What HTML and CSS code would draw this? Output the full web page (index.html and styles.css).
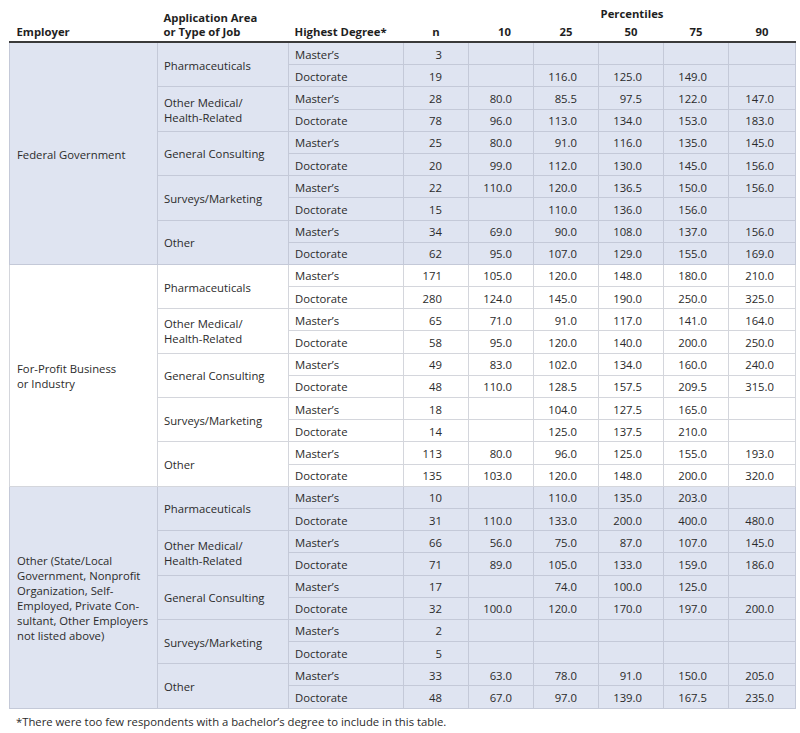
FILE: index.html
```html
<!DOCTYPE html>
<html>
<head>
<meta charset="utf-8">
<link rel="stylesheet" href="styles.css">
</head>
<body>
<div class="page">
<table class="salary">
<colgroup>
<col class="c-emp"><col class="c-area"><col class="c-deg"><col class="c-n">
<col class="c-p"><col class="c-p"><col class="c-p"><col class="c-p"><col class="c-p90">
</colgroup>
<thead>
<tr class="h1">
<th rowspan="2" class="left">Employer</th>
<th rowspan="2" class="left">Application Area<br>or Type of Job</th>
<th rowspan="2" class="left">Highest Degree*</th>
<th rowspan="2">n</th>
<th colspan="5" class="pct">Percentiles</th>
</tr>
<tr class="h2">
<th>10</th><th>25</th><th>50</th><th>75</th><th>90</th>
</tr>
</thead>
<tbody class="blue">
<tr><td rowspan="10" class="emp">Federal Government</td><td rowspan="2" class="area">Pharmaceuticals</td><td class="deg">Master’s</td><td class="n">3</td><td></td><td></td><td></td><td></td><td></td></tr>
<tr><td class="deg">Doctorate</td><td class="n">19</td><td></td><td>116.0</td><td>125.0</td><td>149.0</td><td></td></tr>
<tr><td rowspan="2" class="area">Other Medical/<br>Health-Related</td><td class="deg">Master’s</td><td class="n">28</td><td>80.0</td><td>85.5</td><td>97.5</td><td>122.0</td><td>147.0</td></tr>
<tr><td class="deg">Doctorate</td><td class="n">78</td><td>96.0</td><td>113.0</td><td>134.0</td><td>153.0</td><td>183.0</td></tr>
<tr><td rowspan="2" class="area">General Consulting</td><td class="deg">Master’s</td><td class="n">25</td><td>80.0</td><td>91.0</td><td>116.0</td><td>135.0</td><td>145.0</td></tr>
<tr><td class="deg">Doctorate</td><td class="n">20</td><td>99.0</td><td>112.0</td><td>130.0</td><td>145.0</td><td>156.0</td></tr>
<tr><td rowspan="2" class="area">Surveys/Marketing</td><td class="deg">Master’s</td><td class="n">22</td><td>110.0</td><td>120.0</td><td>136.5</td><td>150.0</td><td>156.0</td></tr>
<tr><td class="deg">Doctorate</td><td class="n">15</td><td></td><td>110.0</td><td>136.0</td><td>156.0</td><td></td></tr>
<tr><td rowspan="2" class="area">Other</td><td class="deg">Master’s</td><td class="n">34</td><td>69.0</td><td>90.0</td><td>108.0</td><td>137.0</td><td>156.0</td></tr>
<tr><td class="deg">Doctorate</td><td class="n">62</td><td>95.0</td><td>107.0</td><td>129.0</td><td>155.0</td><td>169.0</td></tr>
</tbody>
<tbody class="white">
<tr><td rowspan="10" class="emp">For-Profit Business<br>or Industry</td><td rowspan="2" class="area">Pharmaceuticals</td><td class="deg">Master’s</td><td class="n">171</td><td>105.0</td><td>120.0</td><td>148.0</td><td>180.0</td><td>210.0</td></tr>
<tr><td class="deg">Doctorate</td><td class="n">280</td><td>124.0</td><td>145.0</td><td>190.0</td><td>250.0</td><td>325.0</td></tr>
<tr><td rowspan="2" class="area">Other Medical/<br>Health-Related</td><td class="deg">Master’s</td><td class="n">65</td><td>71.0</td><td>91.0</td><td>117.0</td><td>141.0</td><td>164.0</td></tr>
<tr><td class="deg">Doctorate</td><td class="n">58</td><td>95.0</td><td>120.0</td><td>140.0</td><td>200.0</td><td>250.0</td></tr>
<tr><td rowspan="2" class="area">General Consulting</td><td class="deg">Master’s</td><td class="n">49</td><td>83.0</td><td>102.0</td><td>134.0</td><td>160.0</td><td>240.0</td></tr>
<tr><td class="deg">Doctorate</td><td class="n">48</td><td>110.0</td><td>128.5</td><td>157.5</td><td>209.5</td><td>315.0</td></tr>
<tr><td rowspan="2" class="area">Surveys/Marketing</td><td class="deg">Master’s</td><td class="n">18</td><td></td><td>104.0</td><td>127.5</td><td>165.0</td><td></td></tr>
<tr><td class="deg">Doctorate</td><td class="n">14</td><td></td><td>125.0</td><td>137.5</td><td>210.0</td><td></td></tr>
<tr><td rowspan="2" class="area">Other</td><td class="deg">Master’s</td><td class="n">113</td><td>80.0</td><td>96.0</td><td>125.0</td><td>155.0</td><td>193.0</td></tr>
<tr><td class="deg">Doctorate</td><td class="n">135</td><td>103.0</td><td>120.0</td><td>148.0</td><td>200.0</td><td>320.0</td></tr>
</tbody>
<tbody class="blue">
<tr><td rowspan="10" class="emp">Other (State/Local<br>Government, Nonprofit<br>Organization, Self-<br>Employed, Private Con-<br>sultant, Other Employers<br>not listed above)</td><td rowspan="2" class="area">Pharmaceuticals</td><td class="deg">Master’s</td><td class="n">10</td><td></td><td>110.0</td><td>135.0</td><td>203.0</td><td></td></tr>
<tr><td class="deg">Doctorate</td><td class="n">31</td><td>110.0</td><td>133.0</td><td>200.0</td><td>400.0</td><td>480.0</td></tr>
<tr><td rowspan="2" class="area">Other Medical/<br>Health-Related</td><td class="deg">Master’s</td><td class="n">66</td><td>56.0</td><td>75.0</td><td>87.0</td><td>107.0</td><td>145.0</td></tr>
<tr><td class="deg">Doctorate</td><td class="n">71</td><td>89.0</td><td>105.0</td><td>133.0</td><td>159.0</td><td>186.0</td></tr>
<tr><td rowspan="2" class="area">General Consulting</td><td class="deg">Master’s</td><td class="n">17</td><td></td><td>74.0</td><td>100.0</td><td>125.0</td><td></td></tr>
<tr><td class="deg">Doctorate</td><td class="n">32</td><td>100.0</td><td>120.0</td><td>170.0</td><td>197.0</td><td>200.0</td></tr>
<tr><td rowspan="2" class="area">Surveys/Marketing</td><td class="deg">Master’s</td><td class="n">2</td><td></td><td></td><td></td><td></td><td></td></tr>
<tr><td class="deg">Doctorate</td><td class="n">5</td><td></td><td></td><td></td><td></td><td></td></tr>
<tr><td rowspan="2" class="area">Other</td><td class="deg">Master’s</td><td class="n">33</td><td>63.0</td><td>78.0</td><td>91.0</td><td>150.0</td><td>205.0</td></tr>
<tr><td class="deg">Doctorate</td><td class="n">48</td><td>67.0</td><td>97.0</td><td>139.0</td><td>167.5</td><td>235.0</td></tr>
</tbody>
</table>
<p class="note">*There were too few respondents with a bachelor’s degree to include in this table.</p>
</div>
</body>
</html>
```

FILE: styles.css
```css
html, body {
  margin: 0;
  padding: 0;
  background: #ffffff;
}
.page {
  padding: 0 5px 0 9px;
  font-family: "Open Sans", "Liberation Sans", sans-serif;
  font-size: 11.3px;
  color: #2b2b2b;
}
.salary {
  width: 786px;
  border-collapse: collapse;
  table-layout: fixed;
}
.c-emp { width: 148px; }
.c-area { width: 131px; }
.c-deg { width: 115px; }
.c-n { width: 65px; }
.c-p { width: 65px; }
.c-p90 { width: 67px; }

.salary th {
  font-weight: 700;
  color: #1f1f1f;
  padding: 0;
  text-align: center;
  vertical-align: bottom;
  line-height: 14px;
}
.salary th.left {
  text-align: left;
  padding-left: 6px;
}
.salary th:first-child {
  padding-left: 7px;
}
.h1 { height: 21px; }
.h1 th { padding-bottom: 2px; }
.h2 { height: 21px; }
.h2 th { padding-bottom: 2px; }
.pct { vertical-align: middle; }
.salary th.pct { padding-bottom: 0; padding-top: 0; }
thead tr.h2 th,
thead tr.h1 th[rowspan] {
  border-bottom: 2px solid #3a3a3a;
}

.salary td {
  height: 20.2px;
  padding: 1px 21px 0 0;
  text-align: right;
  vertical-align: middle;
  line-height: 15px;
  white-space: nowrap;
}
.blue td {
  background: #dfe4f1;
  border: 1px solid #c4c9d8;
}
.white td {
  background: #ffffff;
  border: 1px solid #d4d6dc;
}
.salary td.emp {
  text-align: left;
  padding: 2px 0 0 7px;
}
.salary td.area {
  text-align: left;
  padding: 1px 0 0 6px;
}
.salary td.deg {
  text-align: left;
  padding: 1px 0 0 6px;
}
.salary td.n {
  padding-right: 26px;
}
tbody + tbody tr:first-child td {
  border-top: 1px solid #bfc3cf;
}
.note {
  margin: 5px 0 0 7px;
  font-size: 11.3px;
  color: #2b2b2b;
}
```
